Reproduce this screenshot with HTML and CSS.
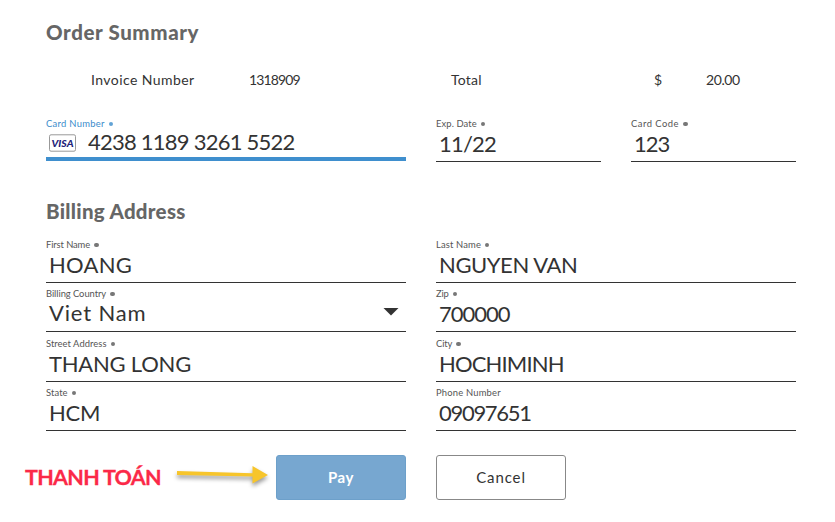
FILE: index.html
```html
<!DOCTYPE html>
<html lang="en">
<head>
<meta charset="utf-8">
<title>Order Summary</title>
<link rel="stylesheet" href="styles.css">
</head>
<body>
<main class="page">
  <h2 class="heading"><span class="t-order">Order Summary</span></h2>
  <div class="summary">
    <span class="t-invoice">Invoice Number</span>
    <span class="t-invno">1318909</span>
    <span class="t-total">Total</span>
    <span>$</span>
    <span class="t-amount">20.00</span>
  </div>

  <div class="cards">
    <div class="field field-active">
      <div class="label"><span class="l-card">Card Number</span><i class="dot"></i></div>
      <div class="value">
        <svg class="visa" viewBox="0 0 28 18" width="28" height="18">
          <rect x="1.5" y=".8" width="26" height="16.4" rx="1.5" fill="#fff" stroke="#999"/>
          <text x="14.5" y="12.6" text-anchor="middle" textLength="22" lengthAdjust="spacingAndGlyphs">VISA</text>
        </svg>
        <span class="v-card">4238 1189 3261 5522</span>
      </div>
    </div>
    <div class="field">
      <div class="label"><span class="l-exp">Exp. Date</span><i class="dot"></i></div>
      <div class="value"><span class="v-exp">11/22</span></div>
    </div>
    <div class="field">
      <div class="label"><span class="l-code">Card Code</span><i class="dot"></i></div>
      <div class="value"><span class="v-code">123</span></div>
    </div>
  </div>

  <h2 class="heading heading-billing"><span class="t-billing">Billing Address</span></h2>
  <div class="billing">
    <div class="field">
      <div class="label"><span class="l-first">First Name</span><i class="dot"></i></div>
      <div class="value"><span class="v-first">HOANG</span></div>
    </div>
    <div class="field">
      <div class="label"><span class="l-last">Last Name</span><i class="dot"></i></div>
      <div class="value"><span class="v-last">NGUYEN VAN</span></div>
    </div>
    <div class="field field-select">
      <div class="label"><span class="l-country">Billing Country</span><i class="dot"></i></div>
      <div class="value"><span class="v-country">Viet Nam</span><i class="caret"></i></div>
    </div>
    <div class="field">
      <div class="label"><span class="l-zip">Zip</span><i class="dot"></i></div>
      <div class="value"><span class="v-zip">700000</span></div>
    </div>
    <div class="field">
      <div class="label"><span class="l-street">Street Address</span><i class="dot"></i></div>
      <div class="value"><span class="v-street">THANG LONG</span></div>
    </div>
    <div class="field">
      <div class="label"><span class="l-city">City</span><i class="dot"></i></div>
      <div class="value"><span class="v-city">HOCHIMINH</span></div>
    </div>
    <div class="field">
      <div class="label"><span class="l-state">State</span><i class="dot"></i></div>
      <div class="value"><span class="v-state">HCM</span></div>
    </div>
    <div class="field">
      <div class="label"><span class="l-phone">Phone Number</span></div>
      <div class="value"><span class="v-phone">09097651</span></div>
    </div>
  </div>

  <div class="actions">
    <strong class="note">THANH TOÁN</strong>
    <svg class="arrow" viewBox="0 0 104 34" width="104" height="34">
      <path d="M7 11 L82.5 13.2 V6 L98 15 L82.5 23.5 V16.6 L7 15Z" fill="#f7c52b"/>
    </svg>
    <button class="btn btn-pay"><span>Pay</span></button>
    <button class="btn btn-cancel"><span>Cancel</span></button>
  </div>
</main>
</body>
</html>
```

FILE: styles.css
```css
* { box-sizing: border-box; }
body {
  margin: 0;
  background: #fff;
  color: #333;
  font-family: "Century Gothic", Lato, sans-serif;
}
.page { width: 835px; height: 522px; padding: 17px 39px 0 46px; overflow: hidden; }
.heading {
  margin: 0;
  height: 30px;
  font-size: 20.5px;
  line-height: 30px;
  font-weight: 900;
  color: #666;
}
.summary {
  display: grid;
  grid-template-columns: 158px 202px 203px 52px 1fr;
  height: 30px;
  margin: 18px 0 0 45px;
  font-size: 14px;
  line-height: 30px;
}
.cards {
  display: grid;
  grid-template-columns: 360px 165px 165px;
  gap: 30px;
  height: 49px;
  margin-top: 18px;
}
.field { display: flex; flex-direction: column; border-bottom: 1px solid #333; }
.field-active { height: 48px; border-bottom: 4px solid #3f8fce; }
.field-active .label { color: #3b8ccb; }
.cards .field-active .value { height: 24px; line-height: 24px; padding-left: 2px; margin-top: -3px; }
.visa { margin: 0 12px -1px 0; }
.visa text { font: italic 900 10px Lato, sans-serif; fill: #23237a; }
.label {
  display: flex;
  align-items: center;
  gap: 4px;
  height: 20px;
  padding-top: 2px;
  font-size: 9.4px;
  line-height: 18px;
  color: #555;
}
.dot { width: 4.5px; height: 4.5px; border-radius: 50%; background: currentColor; opacity: .8; }
.value {
  display: flex;
  align-items: center;
  height: 26px;
  padding-left: 3px;
  font-size: 22px;
  line-height: 26px;
  white-space: nowrap;
}
.cards .value { margin-top: -2px; }
.heading-billing { margin-top: 34px; }
.billing {
  display: grid;
  grid-template-columns: 360px 360px;
  grid-template-rows: 49px 49px 50px 49px;
  column-gap: 30px;
  margin-top: 8px;
}
.billing .field { justify-content: flex-end; }
.billing .label { height: 18px; padding-top: 0; margin-bottom: -2px; }
.billing .value { margin-bottom: 4px; }
.billing .field-select .value { margin-bottom: 5px; }
.billing .field-select .label { margin-bottom: -3px; }
.caret {
  width: 16px;
  height: 8px;
  margin: -3px 7px 0 auto;
  background: #333;
  clip-path: polygon(0 0, 100% 0, 50% 100%);
}

/* Tracking per text */
.t-order { letter-spacing: .6px; }
.t-billing { letter-spacing: .28px; }
.t-invoice { letter-spacing: .43px; }
.t-invno { letter-spacing: -.85px; }
.t-total { letter-spacing: .2px; }
.t-amount { letter-spacing: -.4px; }
.l-card { letter-spacing: .3px; }
.l-exp { letter-spacing: .1px; }
.l-code { letter-spacing: .5px; }
.l-first { letter-spacing: -.1px; }
.l-last { letter-spacing: .15px; }
.l-country { letter-spacing: -.05px; }
.l-zip { letter-spacing: -.2px; }
.l-street { letter-spacing: .05px; }
.l-city { letter-spacing: -.1px; }
.l-state { letter-spacing: .1px; }
.l-phone { letter-spacing: .2px; }
.v-card { letter-spacing: -.76px; }
.v-exp { letter-spacing: -.8px; }
.v-code { letter-spacing: -1px; }
.v-first { letter-spacing: .25px; }
.v-last { letter-spacing: -.42px; }
.v-country { letter-spacing: .85px; }
.v-zip { letter-spacing: -1px; }
.v-street { letter-spacing: -.22px; }
.v-city { letter-spacing: -.85px; }
.v-state { letter-spacing: -.3px; }
.v-phone { letter-spacing: -1.3px; }

.actions { display: flex; align-items: flex-start; height: 45px; margin: 24px 0 0 -21px; }
.note {
  width: 145px;
  font: 700 21.5px/45px Lato, sans-serif;
  letter-spacing: -.7px;
  color: #fb2948;
  -webkit-text-stroke: .3px #fb2948;
  white-space: nowrap;
}
.arrow { margin: 5px 2px 0 0; filter: drop-shadow(0 3px 2px rgba(0, 0, 0, .4)); }
.btn {
  width: 130px;
  height: 45px;
  padding: 0;
  border: 1px solid #888;
  border-radius: 3px;
  background: #fff;
  color: #333;
  font: 15px/43px "Century Gothic", Lato, sans-serif;
  letter-spacing: .9px;
}
.btn-pay {
  margin-right: 30px;
  border-color: #6da0ca;
  background: #77a7d0;
  color: #fff;
  font-weight: bold;
  letter-spacing: .6px;
}
```
